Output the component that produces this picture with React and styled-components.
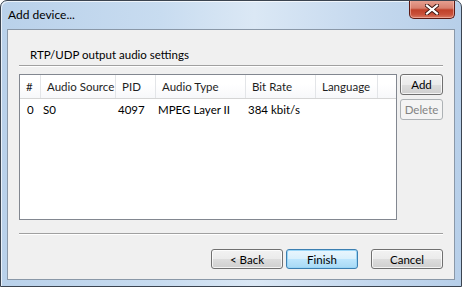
import React from 'react';
import styled, { createGlobalStyle } from 'styled-components';

const GlobalStyle = createGlobalStyle`
  html, body {
    margin: 0;
    padding: 0;
    width: 462px;
    height: 287px;
    overflow: hidden;
    background: #ffffff;
  }
  * { box-sizing: border-box; }
`;

const Window = styled.div`
  width: 462px;
  height: 287px;
  border: 1px solid #3b4450;
  border-radius: 7px 7px 0 0;
  background: linear-gradient(90deg, #b9d1ea 0%, #c8dcf0 35%, #dbe8f5 55%, #c4d8ee 80%, #b7cfe9 100%);
  display: flex;
  flex-direction: column;
  font-family: Lato, "Liberation Sans", sans-serif;
  font-size: 11.5px;
  color: #000;
  overflow: hidden;
  box-shadow: inset 1px 1px 0 rgba(255,255,255,0.7);
`;

const TitleBar = styled.div`
  height: 28px;
  display: flex;
  align-items: flex-start;
  justify-content: space-between;
  padding-left: 7px;
`;

const Title = styled.div`
  margin-top: 6px;
  font-size: 12px;
  color: #000;
`;

const CloseButton = styled.div`
  width: 46px;
  height: 19px;
  margin-right: 6px;
  margin-top: -1px;
  border: 1px solid #5c1a14;
  border-top: none;
  border-radius: 0 0 5px 5px;
  background: linear-gradient(180deg, #e8a394 0%, #d8806e 45%, #c0412a 55%, #c9503a 80%, #d87a64 100%);
  display: flex;
  align-items: center;
  justify-content: center;
  box-shadow: inset 0 0 0 1px rgba(255, 200, 190, 0.55);
`;

const Client = styled.div`
  flex: 1;
  margin: 0 6px 6px 6px;
  border: 1px solid #8a98a8;
  background: #f0f0f0;
  display: flex;
  flex-direction: column;
  padding: 0 11px 0 11px;
`;

const GroupLabel = styled.div`
  padding: 18px 0 0 11px;
  height: 35px;
`;

const Separator = styled.div`
  height: 2px;
  border-top: 1px solid #a0a0a0;
  border-bottom: 1px solid #ffffff;
`;

const MainRow = styled.div`
  display: flex;
  gap: 3px;
  margin-top: 7px;
  height: 146px;
`;

const ListView = styled.div`
  width: 378px;
  border: 1px solid #828790;
  background: #ffffff;
  display: flex;
  flex-direction: column;
`;

const cols = '21px 75px 40px 90px 70px 62px 1fr';

const HeaderRow = styled.div`
  display: grid;
  grid-template-columns: ${cols};
  height: 24px;
  border-bottom: 1px solid #d5d5d5;
  background: linear-gradient(180deg, #ffffff 0%, #ffffff 40%, #f7f8fa 100%);
`;

const HeaderCell = styled.div`
  border-right: ${(p) => (p.$last ? 'none' : '1px solid #e3e5e8')};
  padding-left: ${(p) => p.$pad || 6}px;
  display: flex;
  align-items: center;
  white-space: nowrap;
  overflow: hidden;
  color: #1e1e1e;
`;

const DataRow = styled.div`
  display: grid;
  grid-template-columns: ${cols};
  height: 20px;
  align-items: center;
`;

const DataCell = styled.div`
  padding-left: ${(p) => p.$pad || 2}px;
  white-space: nowrap;
  overflow: hidden;
`;

const SideButtons = styled.div`
  display: flex;
  flex-direction: column;
  gap: 4px;
`;

const Button = styled.div`
  width: ${(p) => p.$w || 72}px;
  height: ${(p) => p.$h || 20}px;
  border: 1px solid ${(p) => (p.$disabled ? '#adb2b5' : p.$default ? '#3c7fb1' : '#707070')};
  border-radius: 3px;
  display: flex;
  align-items: center;
  justify-content: center;
  color: ${(p) => (p.$disabled ? '#838383' : '#000')};
  background: ${(p) =>
    p.$disabled
      ? '#f4f4f4'
      : p.$default
      ? 'linear-gradient(180deg, #eaf6fd 0%, #d9f0fc 50%, #bee6fd 51%, #a7d9f5 100%)'
      : 'linear-gradient(180deg, #f2f2f2 0%, #ebebeb 50%, #dddddd 51%, #cfcfcf 100%)'};
  box-shadow: ${(p) =>
    p.$disabled ? 'none' : p.$default ? 'inset 0 0 0 1px #9ad6f7' : 'inset 0 0 0 1px rgba(255,255,255,0.75)'};
`;

const Spacer = styled.div`
  height: 13px;
`;

const Footer = styled.div`
  display: flex;
  justify-content: flex-end;
  align-items: center;
  padding-top: 14px;
`;

const FooterGap = styled.div`
  width: ${(p) => p.$w}px;
`;

const columns = ['#', 'Audio Source', 'PID', 'Audio Type', 'Bit Rate', 'Language', ''];
const rows = [['0', 'S0', '4097', 'MPEG Layer II', '384 kbit/s', '', '']];

export default function App() {
  return (
    <>
      <GlobalStyle />
      <Window>
        <TitleBar>
          <Title>Add device...</Title>
          <CloseButton>
            <svg width="14" height="11" viewBox="0 0 14 11">
              <path
                d="M2 1.5 L7 5.5 L12 1.5 M2 9.5 L7 5.5 L12 9.5"
                stroke="#3a1410"
                strokeWidth="4"
                fill="none"
                strokeLinecap="square"
              />
              <path
                d="M2 1.5 L7 5.5 L12 1.5 M2 9.5 L7 5.5 L12 9.5"
                stroke="#ffffff"
                strokeWidth="2.2"
                fill="none"
                strokeLinecap="square"
              />
            </svg>
          </CloseButton>
        </TitleBar>
        <Client>
          <GroupLabel>RTP/UDP output audio settings</GroupLabel>
          <Separator />
          <MainRow>
            <ListView>
              <HeaderRow>
                {columns.map((c, i) => (
                  <HeaderCell key={i} $last={i === columns.length - 1}>
                    {c}
                  </HeaderCell>
                ))}
              </HeaderRow>
              {rows.map((r, i) => (
                <DataRow key={i}>
                  {r.map((v, j) => (
                    <DataCell key={j} $pad={j === 0 ? 7 : 2}>
                      {v}
                    </DataCell>
                  ))}
                </DataRow>
              ))}
            </ListView>
            <SideButtons>
              <Button $w={43} $h={21}>Add</Button>
              <Button $w={43} $h={21} $disabled>Delete</Button>
            </SideButtons>
          </MainRow>
          <Spacer />
          <Separator />
          <Footer>
            <Button>&lt; Back</Button>
            <FooterGap $w={3} />
            <Button $default>Finish</Button>
            <FooterGap $w={13} />
            <Button>Cancel</Button>
          </Footer>
        </Client>
      </Window>
    </>
  );
}
